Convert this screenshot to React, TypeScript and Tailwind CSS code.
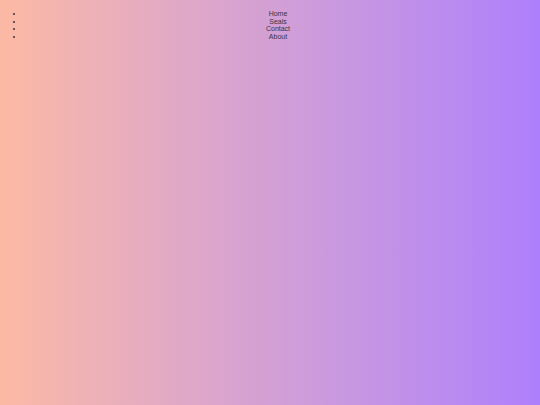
export default function App() {
  return (
    <div className="min-h-[405px] w-full bg-gradient-to-r from-[#fcb9a4] to-[#ae7ffc] px-[8px] pt-[10px] font-['Liberation_Sans',Arial,sans-serif]">
      <ul className="list-disc pl-4 text-center text-[7px] leading-[7.5px] text-[#3a3440]">
        <li>Home</li>
        <li>Seals</li>
        <li>Contact</li>
        <li>About</li>
      </ul>
    </div>
  );
}
